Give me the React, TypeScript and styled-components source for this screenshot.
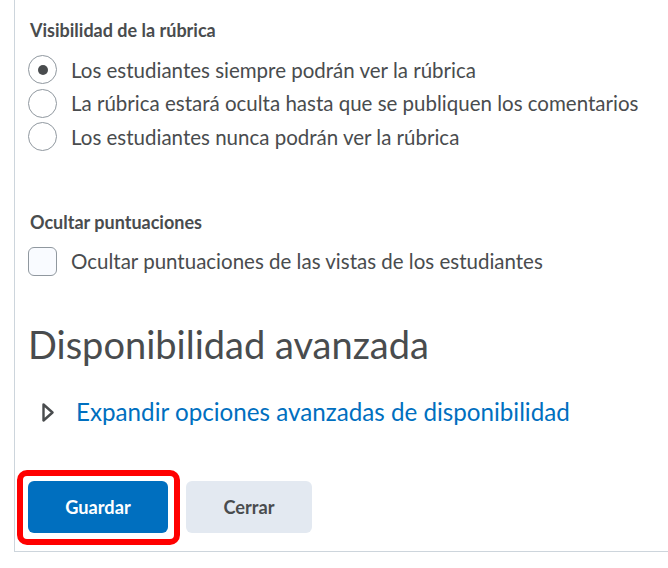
import React, { useState } from 'react';
import styled, { createGlobalStyle } from 'styled-components';

const GlobalStyle = createGlobalStyle`
  html, body {
    margin: 0;
    padding: 0;
    background: #ffffff;
  }
  body {
    font-family: Lato, 'Noto Sans', 'Liberation Sans', sans-serif;
    color: #494c4e;
  }
`;

const Panel = styled.div`
  margin-left: 14px;
  border-left: 1px solid #cdd5dc;
  border-bottom: 1px solid #cdd5dc;
  padding: 20px 0 18px 13px;
`;

const FieldLabel = styled.div<{ $top?: number }>`
  margin-top: ${(p) => p.$top ?? 0}px;
  margin-left: 2px;
  font-size: 18px;
  font-weight: 700;
  line-height: 20px;
  color: #494c4e;
`;

const OptionList = styled.div`
  display: flex;
  flex-direction: column;
  margin-top: 13px;
`;

const OptionRow = styled.label`
  display: flex;
  align-items: center;
  gap: 14px;
  height: 33.5px;
  cursor: pointer;
`;

const RadioCircle = styled.span<{ $checked?: boolean }>`
  box-sizing: border-box;
  flex: 0 0 auto;
  width: 29px;
  height: 29px;
  border-radius: 50%;
  border: 1px solid #90989f;
  background: #ffffff;
  display: flex;
  align-items: center;
  justify-content: center;

  &::after {
    content: '';
    width: 10px;
    height: 10px;
    border-radius: 50%;
    background: ${(p) => (p.$checked ? '#494c4e' : 'transparent')};
  }
`;

const CheckBox = styled.span`
  box-sizing: border-box;
  flex: 0 0 auto;
  width: 29px;
  height: 29px;
  border-radius: 6px;
  border: 1px solid #90989f;
  background: #f9fbff;
`;

const OptionText = styled.span`
  font-size: 20.5px;
  line-height: 24px;
  color: #494c4e;
  white-space: nowrap;
`;

const BigHeading = styled.h2`
  margin: 45px 0 0 0;
  font-size: 38px;
  font-weight: 400;
  line-height: 42px;
  color: #494c4e;
  white-space: nowrap;
`;

const ExpandRow = styled.div`
  display: flex;
  align-items: center;
  gap: 22px;
  height: 34px;
  margin-top: 30px;
  padding-left: 14px;
`;

const ExpandLink = styled.a`
  font-size: 24.2px;
  line-height: 28px;
  color: #006fbf;
  text-decoration: none;
  white-space: nowrap;
  cursor: pointer;
`;

const ButtonRow = styled.div`
  display: flex;
  gap: 18px;
  margin-top: 52px;
`;

const Highlight = styled.div`
  position: relative;
  display: flex;

  &::after {
    content: '';
    position: absolute;
    top: -11px;
    left: -11px;
    right: -12px;
    bottom: -12px;
    border: 6px solid #ff0000;
    border-radius: 10px;
    pointer-events: none;
  }
`;

const Button = styled.button<{ $primary?: boolean }>`
  height: 52px;
  width: ${(p) => (p.$primary ? 140 : 126)}px;
  border: none;
  border-radius: 6px;
  font-family: inherit;
  font-size: 18.2px;
  font-weight: 700;
  background: ${(p) => (p.$primary ? '#006fbf' : '#e3e9f1')};
  color: ${(p) => (p.$primary ? '#ffffff' : '#494c4e')};
  cursor: pointer;
`;

const TriangleIcon = () => (
  <svg width="12" height="19" viewBox="0 0 12 19" fill="none">
    <path
      d="M1.5 1.5 L10.5 9.5 L1.5 17.5 Z"
      stroke="#494c4e"
      strokeWidth="2.4"
      strokeLinejoin="round"
    />
  </svg>
);

const visibilityOptions = [
  'Los estudiantes siempre podrán ver la rúbrica',
  'La rúbrica estará oculta hasta que se publiquen los comentarios',
  'Los estudiantes nunca podrán ver la rúbrica',
];

const App: React.FC = () => {
  const [visibility, setVisibility] = useState(0);

  return (
    <>
      <GlobalStyle />
      <Panel>
        <FieldLabel>Visibilidad de la rúbrica</FieldLabel>
        <OptionList>
          {visibilityOptions.map((text, i) => (
            <OptionRow key={text} onClick={() => setVisibility(i)}>
              <RadioCircle $checked={visibility === i} />
              <OptionText>{text}</OptionText>
            </OptionRow>
          ))}
        </OptionList>

        <FieldLabel $top={58}>Ocultar puntuaciones</FieldLabel>
        <OptionList>
          <OptionRow>
            <CheckBox />
            <OptionText>Ocultar puntuaciones de las vistas de los estudiantes</OptionText>
          </OptionRow>
        </OptionList>

        <BigHeading>Disponibilidad avanzada</BigHeading>

        <ExpandRow>
          <TriangleIcon />
          <ExpandLink>Expandir opciones avanzadas de disponibilidad</ExpandLink>
        </ExpandRow>

        <ButtonRow>
          <Highlight>
            <Button $primary>Guardar</Button>
          </Highlight>
          <Button>Cerrar</Button>
        </ButtonRow>
      </Panel>
    </>
  );
};

export default App;
